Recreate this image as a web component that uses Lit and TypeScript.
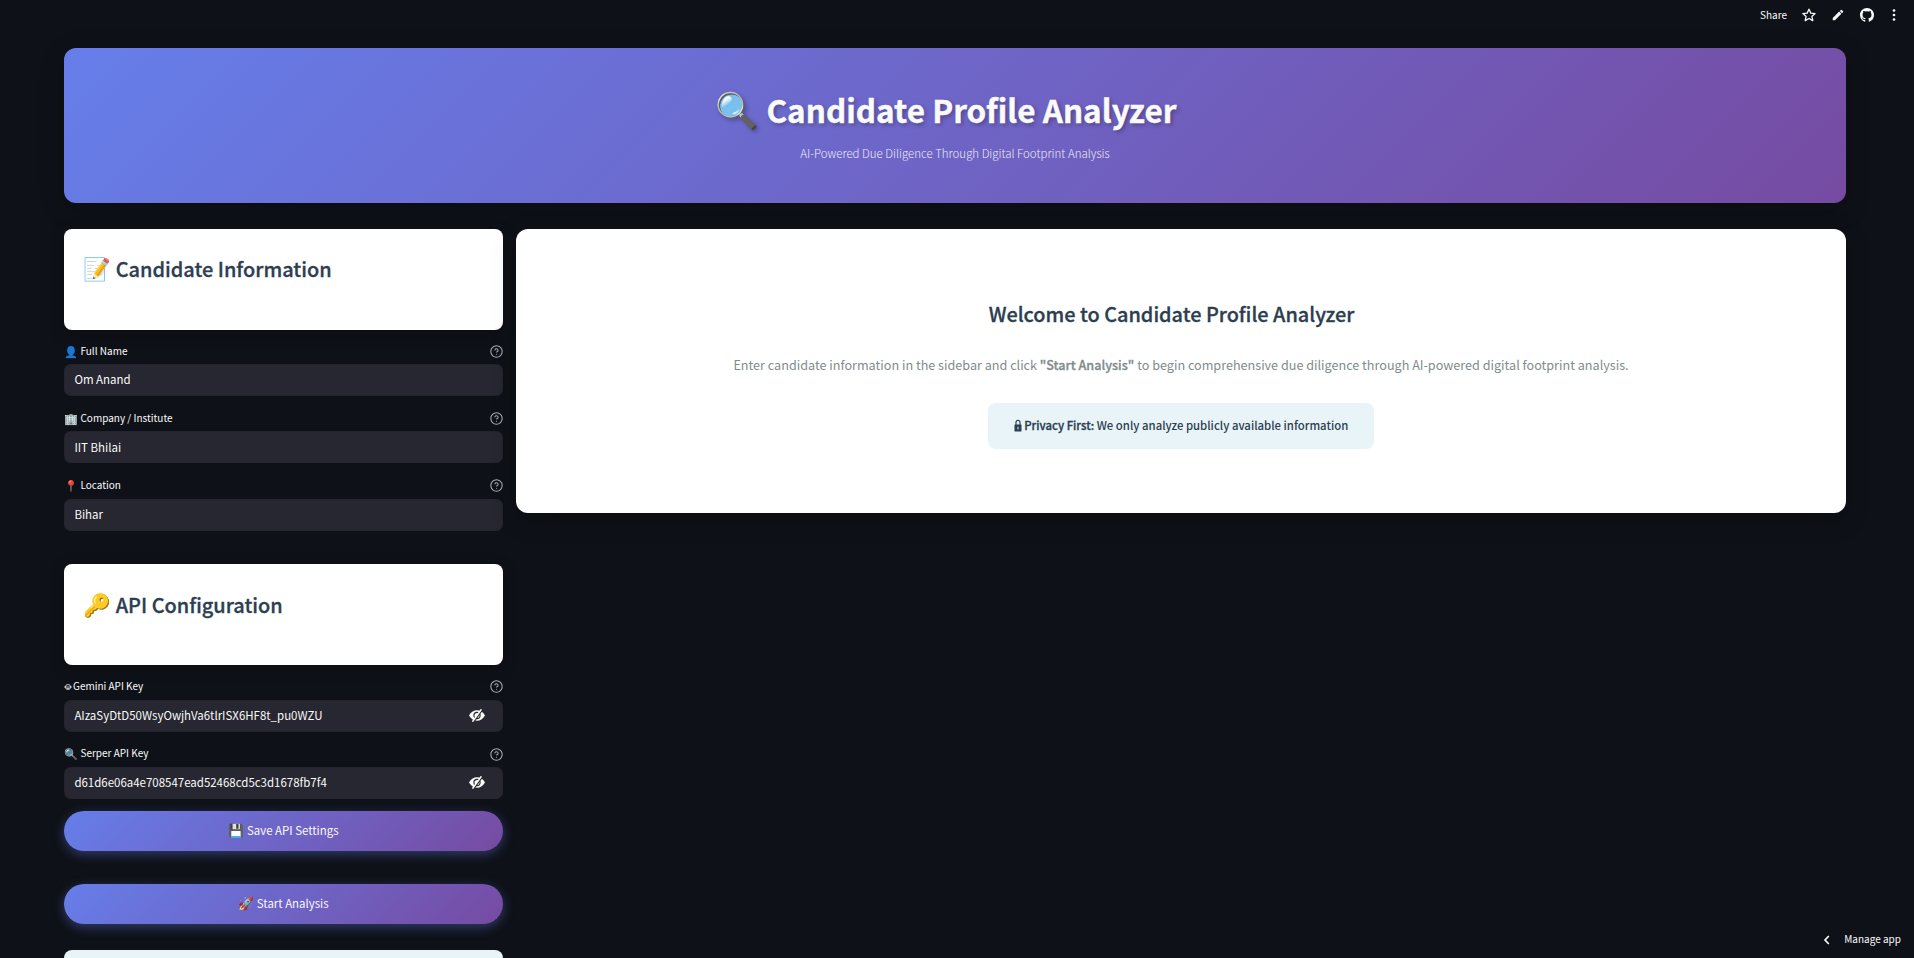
import { LitElement, html, css, svg } from "lit";
import { customElement, property } from "lit/decorators.js";

const robot = svg`<ellipse cx="5" cy="5" rx="3.300" ry="3.200" fill="none" stroke="currentColor" stroke-width=".9"/><path d="M0 5h10M3.400 6.800h3.200" stroke="currentColor" stroke-width=".9"/>`;

@customElement("text-field")
class TextField extends LitElement {
  @property() emoji = "";
  @property() label = "";
  @property() value = "";
  @property({ type: Boolean }) secret = false;
  static styles = css`
    :host { display: block; height: 56px; margin-bottom: 11.2px; }
    .label { display: flex; align-items: center; height: 22.4px; margin-bottom: 1.6px; font-size: 10px; line-height: 18px; white-space: pre; }
    .label span { padding-bottom: 1.400px; }
    .label .help { margin-left: auto; width: 13px; height: 13px; flex: none; }
    .label .emoji { font-size: 11.2px; }
    .robot { width: 8px; height: 8px; margin-right: 1px; flex: none; }
    .box { box-sizing: border-box; height: 32px; border-radius: 6.4px; background: #262730; border: 1px solid #23242d; display: flex; align-items: center; justify-content: space-between; padding: 0 17px 0 9.400px; font-size: 11.470px; line-height: 18px; }
    .box span { padding-bottom: 1.600px; }
    .eye { width: 16px; height: 13px; display: block; }
  `;
  render() {
    return html`
      <div class="label">
        ${this.emoji === "robot" ? html`<svg class="robot" viewBox="0 0 10 10">${robot}</svg>` : html`<span class="emoji">${this.emoji} </span>`}<span>${this.label}</span>
        <svg class="help" viewBox="0 0 24 24" fill="none" stroke="#a9aaae" stroke-width="2" stroke-linecap="round" stroke-linejoin="round"><circle cx="12" cy="12" r="10.5"/><path d="M9.09 9a3 3 0 0 1 5.83 1c0 2-3 3-3 3M12 17h.01"/></svg>
      </div>
      <div class="box"><span>${this.value}</span>
        ${this.secret ? html`<svg class="eye" viewBox="0 0 16 13"><path d="M0 6.500C2 2.800 5 1.300 8 1.300s6 1.500 8 5.200c-2 3.700-5 5.200-8 5.200S2 10.200 0 6.500z" fill="#fafafa"/><circle cx="8" cy="6.500" r="3.100" fill="none" stroke="#262730" stroke-width="1.100"/><path d="M13.600 .4 4.600 13" stroke="#262730" stroke-width="1.600"/><path d="M12.400.3 3.500 12.700" stroke="#fafafa" stroke-width="1.500"/></svg>` : ""}
      </div>`;
  }
}

@customElement("app-root")
class AppRoot extends LitElement {
  static styles = css`
    :host { display: block; box-sizing: border-box; width: 100vw; height: 100vh; overflow: hidden; position: relative; background: #0e1117; color: #fafafa; font-family: "Noto Sans CJK SC", "Noto Color Emoji", sans-serif; }
    .toolbar { display: flex; align-items: center; justify-content: flex-end; height: 30.400px; padding-right: 13px; font-size: 10px; line-height: 16px; }
    .toolbar svg { display: block; width: 14px; height: 14px; }
    .share, .star, .pen { margin-right: 15px; }
    .cat { margin-right: 13px; }
    .main { padding: 17.900px 68px 0 64px; }
    .hero { box-sizing: border-box; height: 155px; border-radius: 12px; background: linear-gradient(135deg, #667eea 0%, #764ba2 100%); text-align: center; padding-top: 38px; box-shadow: 0 6.4px 25.6px rgba(0,0,0,.2); }
    h1, h3, p { margin: 0; }
    .emoji { font-size: 1.117em; line-height: 1; }
    h1 { font-size: 31.500px; line-height: 46px; height: 46px; font-weight: 700; -webkit-text-stroke: .4px #fafafa; text-shadow: 2px 2px 4px rgba(0,0,0,.3); white-space: pre; padding-right: 18px; }
    .tag { margin-top: 11px; font-size: 11.480px; line-height: 20px; font-weight: 300; opacity: .9; }
    .cols { display: grid; grid-template-columns: 439px 1fr; column-gap: 13px; align-items: start; margin-top: 26px; }
    .card { box-sizing: border-box; height: 100.500px; border-radius: 8px; background: #fff; padding: 23px 19.500px 0; box-shadow: 0 3.2px 16px rgba(0,0,0,.2); margin-bottom: 10.400px; }
    h3 { color: #2c3e50; font-size: 19.930px; line-height: 34px; height: 34px; font-weight: 500; -webkit-text-stroke: .3px #2c3e50; white-space: pre; }
    .card.api { margin-top: 33.800px; margin-bottom: 10.800px; padding-top: 23.800px; }
    text-field:has(+ .card.api) { margin-bottom: 0; }
    button { display: block; width: 439px; height: 40px; border: 0; border-radius: 20px; padding: 0 0 1.500px; background: linear-gradient(135deg, #667eea 0%, #764ba2 100%); box-shadow: 0 3.2px 12px rgba(102,126,234,.4); color: #fafafa; font: 400 11.450px/20px "Noto Sans CJK SC", "Noto Color Emoji", sans-serif; white-space: pre; }
    .save { margin-top: 12.100px; }
    .go { margin-top: 33px; }
    .info { height: 40px; margin-top: 26px; border-radius: 8px; background: #e8f4f8; }
    .welcome { box-sizing: border-box; height: 284px; border-radius: 12px; background: #fff; display: flex; flex-direction: column; align-items: center; padding-top: 68px; box-shadow: 0 6.4px 25.6px rgba(0,0,0,.2); }
    .welcome h3 { font-size: 19.870px; padding-right: 19px; }
    .lead { margin-top: 23px; font-size: 12.620px; line-height: 22px; color: #7f8c8d; }
    .lead b { font-weight: 500; -webkit-text-stroke: .3px #7f8c8d; }
    .privacy { box-sizing: border-box; width: 386px; height: 46px; margin-top: 27px; border-radius: 8px; background: #e8f4f8; color: #2c3e50; display: flex; align-items: center; justify-content: center; padding-bottom: 2px; font-size: 11.370px; line-height: 20px; font-weight: 500; }
    .privacy b { font-weight: 500; -webkit-text-stroke: .3px #2c3e50; }
    .lock { width: 8px; height: 13px; margin-right: 2.500px; }
    .manage { position: absolute; right: 13px; bottom: 11px; display: flex; align-items: center; font-size: 10px; line-height: 16px; }
    .manage svg { width: 8px; height: 10px; margin-right: 13px; margin-top: 2px; }
  `;
  render() {
    return html`
      <div class="toolbar">
        <span class="share">Share</span>
        <svg class="star" viewBox="0 0 24 24" fill="none" stroke="#fafafa" stroke-width="2.2" stroke-linejoin="round"><path d="m12 2 3.1 6.8 7.4.7-5.6 4.9 1.7 7.3L12 17.9l-6.600 3.8 1.7-7.3L1.500 9.500l7.4-.7z"/></svg>
        <svg class="pen" viewBox="0 0 24 24" fill="#fafafa"><path d="M3 17.250V21h3.750L17.810 9.940l-3.750-3.750zM20.710 7.040a1 1 0 0 0 0-1.410l-2.340-2.340a1 1 0 0 0-1.410 0l-1.830 1.830 3.750 3.750z"/></svg>
        <svg class="cat" viewBox="0 0 16 16" fill="#fafafa"><path d="M8 0C3.580 0 0 3.580 0 8c0 3.540 2.290 6.530 5.470 7.590.4.070.550-.170.550-.380 0-.190-.010-.820-.010-1.490-2.010.370-2.530-.490-2.690-.940-.090-.230-.480-.940-.820-1.130-.280-.150-.680-.520-.010-.530.630-.010 1.080.580 1.230.820.720 1.210 1.870.870 2.330.660.070-.520.280-.870.510-1.070-1.780-.2-3.640-.890-3.640-3.950 0-.870.310-1.590.820-2.150-.080-.2-.360-1.020.080-2.120 0 0 .670-.210 2.200.820a7.400 7.400 0 0 1 4 0c1.530-1.040 2.200-.820 2.200-.820.440 1.100.160 1.920.080 2.120.510.560.820 1.270.820 2.150 0 3.070-1.870 3.750-3.650 3.950.290.250.540.730.540 1.480 0 1.070-.010 1.930-.010 2.200 0 .210.150.460.550.380A8 8 0 0 0 16 8c0-4.420-3.580-8-8-8z"/></svg>
        <svg viewBox="0 0 14 14" fill="#fafafa"><circle cx="7" cy="2.500" r="1.350"/><circle cx="7" cy="7" r="1.350"/><circle cx="7" cy="11.500" r="1.350"/></svg>
      </div>
      <div class="main">
        <div class="hero">
          <h1><span class="emoji">🔍</span> Candidate Profile Analyzer</h1>
          <p class="tag">AI-Powered Due Diligence Through Digital Footprint Analysis</p>
        </div>
        <div class="cols">
          <div>
            <div class="card"><h3><span class="emoji">📝</span> Candidate Information</h3></div>
            <text-field emoji="👤" label="Full Name" value="Om Anand"></text-field>
            <text-field emoji="🏢" label="Company / Institute" value="IIT Bhilai"></text-field>
            <text-field emoji="📍" label="Location" value="Bihar"></text-field>
            <div class="card api"><h3><span class="emoji">🔑</span> API Configuration</h3></div>
            <text-field emoji="robot" label="Gemini API Key" value="AIzaSyDtD50WsyOwjhVa6tlrISX6HF8t_pu0WZU" secret></text-field>
            <text-field emoji="🔍" label="Serper API Key" value="d61d6e06a4e708547ead52468cd5c3d1678fb7f4" secret></text-field>
            <button class="save"><span class="emoji">💾</span> Save API Settings</button>
            <button class="go"><span class="emoji">🚀</span> Start Analysis</button>
            <div class="info"></div>
          </div>
          <div class="welcome">
            <h3>Welcome to Candidate Profile Analyzer</h3>
            <p class="lead">Enter candidate information in the sidebar and click <b>"Start Analysis"</b> to begin comprehensive due diligence through AI-powered digital footprint analysis.</p>
            <div class="privacy"><svg class="lock" viewBox="0 0 8 13"><path d="M2 6V3.300a2 2 0 0 1 4 0V6" fill="none" stroke="currentColor" stroke-width="1.200"/><rect x=".5" y="5.500" width="7" height="7" rx=".6" fill="currentColor"/><path d="M4 7.800v2.600" stroke="#e8f4f8" stroke-width="1"/></svg><span><b>Privacy First:</b> We only analyze publicly available information</span></div>
          </div>
        </div>
      </div>
      <div class="manage"><svg viewBox="0 0 8 10" fill="none" stroke="#fafafa" stroke-width="1.700"><path d="M5.800 1 2 5l3.800 4"/></svg>Manage app</div>`;
  }
}
